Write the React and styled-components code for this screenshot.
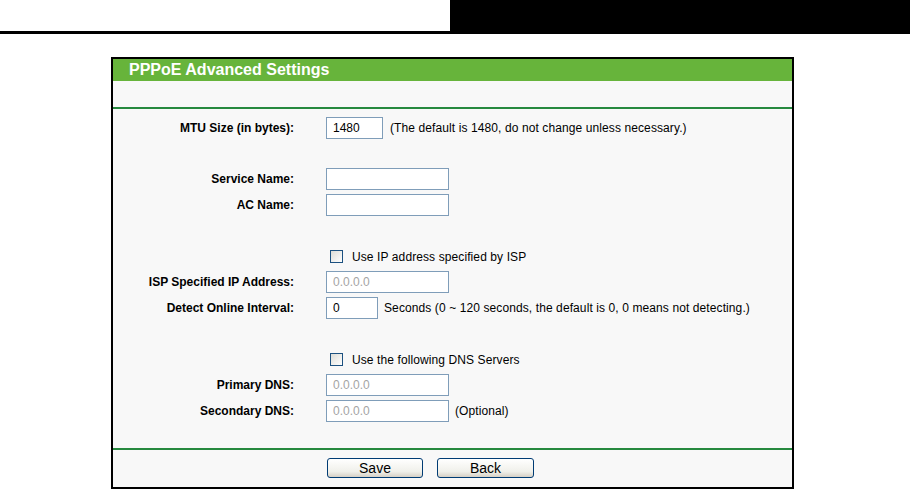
import React from "react";
import styled, { createGlobalStyle } from "styled-components";

const Global = createGlobalStyle`
    body {
        margin: 0;
        background: #ffffff;
        font-family: "Liberation Sans", Arial, sans-serif;
    }
`;

const TopBar = styled.div`
    display: flex;
    height: 34px;
`;
const TopLeft = styled.div`
    width: 450px;
    box-sizing: border-box;
    border-bottom: 3px solid #000;
`;
const TopRight = styled.div`
    flex: 1;
    background: #000;
`;

const Panel = styled.div`
    margin: 23px 0 0 111px;
    width: 683px;
    box-sizing: border-box;
    border: 2px solid #000;
    background: #f8f8f8;
`;
const Title = styled.div`
    height: 22px;
    line-height: 22px;
    padding-left: 16px;
    background: #67b43b;
    color: #fff;
    font-size: 16px;
    font-weight: bold;
`;
const Blank = styled.div`
    height: ${p => p.$h}px;
`;
const Divider = styled.div`
    height: 2px;
    background: #26893f;
`;

const Form = styled.div`
    padding-top: 6px;
`;
const Row = styled.div`
    display: grid;
    grid-template-columns: 181px 1fr;
    column-gap: 32px;
    align-items: center;
    height: 25.75px;
    font-size: 12px;
    letter-spacing: 0.1px;
    color: #000;
`;
const Label = styled.span`
    text-align: right;
    font-weight: bold;
    letter-spacing: 0;
`;
const Field = styled.div`
    display: flex;
    align-items: center;
    gap: ${p => p.$gap || 6}px;
`;
const Input = styled.input`
    box-sizing: border-box;
    width: ${p => p.$w}px;
    height: 22px;
    margin: 0;
    padding: 0 0 0 6px;
    border: 1px solid #7f9db9;
    background: #fff;
    font-family: "Liberation Sans", Arial, sans-serif;
    font-size: 12px;
    color: #000;
    outline: none;
    &:disabled {
        color: #a4a4a4;
    }
`;
const Box = styled.span`
    box-sizing: border-box;
    width: 13px;
    height: 13px;
    margin-left: 4px;
    margin-right: 3px;
    border: 1px solid #1c5180;
    background: linear-gradient(135deg, #dcdcd6, #ffffff);
`;

const ButtonBar = styled.div`
    display: flex;
    gap: 14px;
    height: 37px;
    box-sizing: border-box;
    padding: 8px 0 0 214px;
`;
const Button = styled.button`
    width: ${p => p.$w}px;
    height: 20px;
    margin: 0;
    padding: 0;
    border: 1px solid #003c74;
    border-radius: 3px;
    background: linear-gradient(#ffffff, #f0f0ea 70%, #d6d0c5);
    font-family: "Liberation Sans", Arial, sans-serif;
    font-size: 14px;
    color: #000;
`;

const Check = ({ children }) => (
    <Row>
        <span />
        <Field $gap={6}>
            <Box />
            <span>{children}</span>
        </Field>
    </Row>
);

const TextRow = ({ label, w, value, disabled, note, gap }) => (
    <Row>
        <Label>{label}</Label>
        <Field $gap={gap}>
            <Input $w={w} defaultValue={value} disabled={disabled} />
            {note && <span>{note}</span>}
        </Field>
    </Row>
);

const App = () => {
    return (
        <>
            <Global />
            <TopBar>
                <TopLeft />
                <TopRight />
            </TopBar>
            <Panel>
                <Title>PPPoE Advanced Settings</Title>
                <Blank $h={26} />
                <Divider />
                <Form>
                    <TextRow label="MTU Size (in bytes):" w={57} value="1480" gap={7}
                        note="(The default is 1480, do not change unless necessary.)" />
                    <Row />
                    <TextRow label="Service Name:" w={123} value="" />
                    <TextRow label="AC Name:" w={123} value="" />
                    <Row />
                    <Check>Use IP address specified by ISP</Check>
                    <TextRow label="ISP Specified IP Address:" w={123} value="0.0.0.0" disabled />
                    <TextRow label="Detect Online Interval:" w={52} value="0"
                        note="Seconds (0 ~ 120 seconds, the default is 0, 0 means not detecting.)" />
                    <Row />
                    <Check>Use the following DNS Servers</Check>
                    <TextRow label="Primary DNS:" w={123} value="0.0.0.0" disabled />
                    <TextRow label="Secondary DNS:" w={123} value="0.0.0.0" disabled note="(Optional)" />
                </Form>
                <Blank $h={24} />
                <Divider />
                <ButtonBar>
                    <Button $w={96}>Save</Button>
                    <Button $w={97}>Back</Button>
                </ButtonBar>
            </Panel>
        </>
    );
};

export default App;
